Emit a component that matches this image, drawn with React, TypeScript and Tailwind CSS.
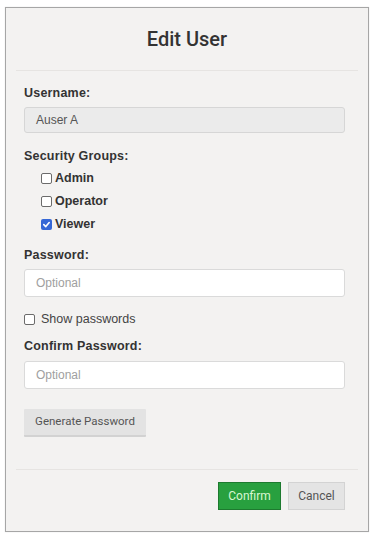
import React from "react";

const sans = { fontFamily: '"Liberation Sans", Arial, sans-serif' };
const roboto = { fontFamily: 'Roboto, "Liberation Sans", sans-serif' };

function Box({ checked }: { checked?: boolean }) {
  if (checked) {
    return (
      <span className="inline-flex w-[11px] h-[11px] rounded-[2px] bg-[#3567d6] items-center justify-center shrink-0">
        <svg width="9" height="9" viewBox="0 0 10 10">
          <path d="M2 5.2 L4.2 7.3 L8 2.8" fill="none" stroke="#fff" strokeWidth="1.8" strokeLinecap="round" strokeLinejoin="round" />
        </svg>
      </span>
    );
  }
  return <span className="inline-block w-[11px] h-[11px] rounded-[2px] border border-[#6b6b6b] bg-white shrink-0" />;
}

function Label({ children, className = "" }: { children: React.ReactNode; className?: string }) {
  return (
    <div className={"text-[12.5px] leading-[16px] font-bold text-[#333] tracking-[0.2px] " + className} style={sans}>
      {children}
    </div>
  );
}

function Input({ value, placeholder, disabled, className = "" }: { value?: string; placeholder?: string; disabled?: boolean; className?: string }) {
  return (
    <div
      className={
        "w-[321px] rounded-[3px] border flex items-center pl-[11px] text-[12px] " +
        (disabled ? "bg-[#ebebeb] border-[#d6d6d6] text-[#555] " : "bg-white border-[#dadada] text-[#a0a0a0] ") +
        className
      }
      style={sans}
    >
      {value ?? placeholder}
    </div>
  );
}

export default function App() {
  return (
    <div className="w-[379px] h-[544px] bg-white pt-[7px] pl-[5px]">
      <div className="w-[364px] h-[525px] border border-[#a6a6a6] bg-[#f3f2f1] flex flex-col shadow-[0_0_1px_rgba(0,0,0,0.15)]">
        <div className="h-[62px] flex items-center justify-center text-[20px] font-medium text-[#333]" style={roboto}>
          Edit User
        </div>
        <div className="mx-[10px] border-t border-[#e6e4e2]" />
        <div className="pl-[18px] flex flex-col">
          <Label className="mt-[14px]">Username:</Label>
          <Input disabled value="Auser A" className="mt-[6px] h-[26px]" />
          <Label className="mt-[15px]">Security Groups:</Label>
          <div className="mt-[3px] pl-[17px] flex flex-col">
            {[
              ["Admin", false],
              ["Operator", false],
              ["Viewer", true],
            ].map(([name, c]) => (
              <div key={name as string} className="h-[23px] flex items-center gap-[3px]">
                <Box checked={c as boolean} />
                <span className="text-[12.5px] font-bold text-[#333]" style={sans}>
                  {name as string}
                </span>
              </div>
            ))}
          </div>
          <Label className="mt-[11px]">Password:</Label>
          <Input placeholder="Optional" className="mt-[6px] h-[28px]" />
          <div className="mt-[14px] h-[16px] flex items-center gap-[6px]">
            <Box />
            <span className="text-[12.5px] text-[#444]" style={sans}>Show passwords</span>
          </div>
          <Label className="mt-[11px]">Confirm Password:</Label>
          <Input placeholder="Optional" className="mt-[7px] h-[28px]" />
          <div
            className="mt-[20px] w-[122px] h-[28px] bg-[#e3e3e3] border-b-2 border-[#d2d2d2] rounded-[1px] flex items-center justify-center text-[11.5px] text-[#555]"
            style={roboto}
          >
            Generate Password
          </div>
        </div>
        <div className="mt-[32px] mx-[10px] border-t border-[#e6e4e2]" />
        <div className="mt-[12px] pr-[23px] flex justify-end gap-[7px]">
          <div
            className="w-[63px] h-[28px] bg-[#28a03f] border border-[#1d7a2f] flex items-center justify-center text-[12px] text-[#d8f7d2]"
            style={roboto}
          >
            Confirm
          </div>
          <div
            className="w-[57px] h-[28px] bg-[#e4e4e4] border border-[#d3d3d3] flex items-center justify-center text-[12px] text-[#555]"
            style={roboto}
          >
            Cancel
          </div>
        </div>
      </div>
    </div>
  );
}
